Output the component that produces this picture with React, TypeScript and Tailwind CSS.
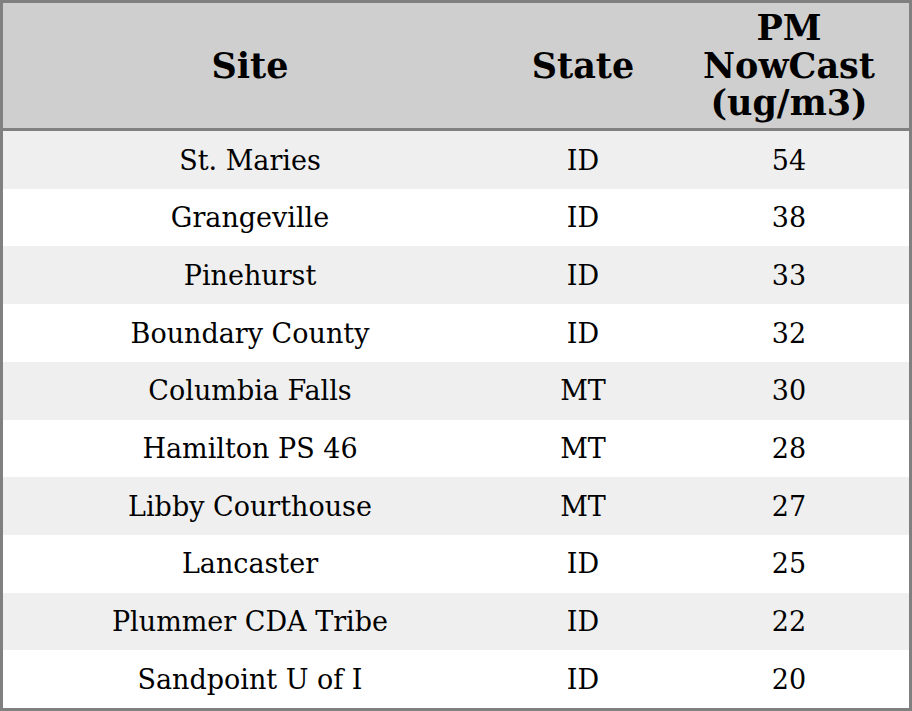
const ROWS: [string, string, number][] = [
  ["St. Maries", "ID", 54],
  ["Grangeville", "ID", 38],
  ["Pinehurst", "ID", 33],
  ["Boundary County", "ID", 32],
  ["Columbia Falls", "MT", 30],
  ["Hamilton PS 46", "MT", 28],
  ["Libby Courthouse", "MT", 27],
  ["Lancaster", "ID", 25],
  ["Plummer CDA Tribe", "ID", 22],
  ["Sandpoint U of I", "ID", 20],
];

export default function App() {
  return (
    <div className="w-[912px] h-[711px] border-[3px] border-[#808080] bg-white font-['DejaVu_Serif',serif] text-black flex flex-col">
      {/* header */}
      <div className="h-[128px] shrink-0 bg-[#cfcfcf] border-b-[3px] border-[#808080] grid grid-cols-[494px_172px_240px] items-center text-center font-bold text-[35px] leading-[37.5px]">
        <div>Site</div>
        <div>State</div>
        <div>
          PM
          <br />
          NowCast
          <br />
          (ug/m3)
        </div>
      </div>

      {/* rows */}
      <div className="flex-1 grid grid-rows-10">
        {ROWS.map(([site, state, pm], i) => (
          <div
            key={site}
            className={`grid grid-cols-[494px_172px_240px] items-center text-center text-[27px] pt-[2px] ${i % 2 === 0 ? "bg-[#efefef]" : "bg-white"}`}
          >
            <div>{site}</div>
            <div>{state}</div>
            <div>{pm}</div>
          </div>
        ))}
      </div>
    </div>
  );
}
